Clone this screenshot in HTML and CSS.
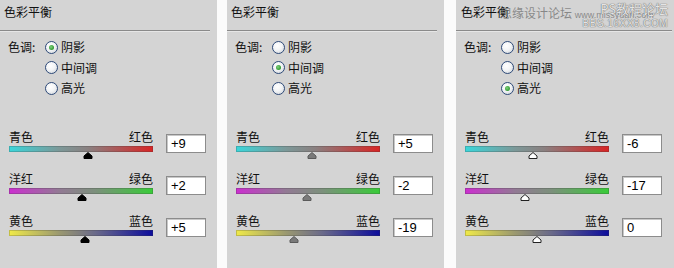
FILE: index.html
```html
<!DOCTYPE html>
<html lang="zh-CN">
<head>
<meta charset="utf-8">
<title>色彩平衡</title>
<link rel="stylesheet" href="styles.css">
</head>
<body>
<div class="wrap">

  <section class="panel p1 shadow">
    <div class="title">色彩平衡</div>
    <div class="rule"></div>
    <div class="tone">
      <span class="tone-label">色调:</span>
      <ul class="radios">
        <li><span class="radio on"></span>阴影</li>
        <li><span class="radio"></span>中间调</li>
        <li><span class="radio"></span>高光</li>
      </ul>
    </div>
    <div class="sliders">
      <div class="row">
        <div class="slider">
          <div class="ends"><span>青色</span><span>红色</span></div>
          <div class="track"><div class="bar cr"></div><svg class="thumb" style="left:78.5px" viewBox="0 0 9 7"><path d="M4.5 0.5 L8.5 4 L8.5 6.5 L0.5 6.5 L0.5 4 Z"/></svg></div>
        </div>
        <div class="val">+9</div>
      </div>
      <div class="row">
        <div class="slider">
          <div class="ends"><span>洋红</span><span>绿色</span></div>
          <div class="track"><div class="bar mg"></div><svg class="thumb" style="left:73.4px" viewBox="0 0 9 7"><path d="M4.5 0.5 L8.5 4 L8.5 6.5 L0.5 6.5 L0.5 4 Z"/></svg></div>
        </div>
        <div class="val">+2</div>
      </div>
      <div class="row">
        <div class="slider">
          <div class="ends"><span>黄色</span><span>蓝色</span></div>
          <div class="track"><div class="bar yb"></div><svg class="thumb" style="left:75.6px" viewBox="0 0 9 7"><path d="M4.5 0.5 L8.5 4 L8.5 6.5 L0.5 6.5 L0.5 4 Z"/></svg></div>
        </div>
        <div class="val">+5</div>
      </div>
    </div>
  </section>

  <section class="panel p2 mid">
    <div class="title">色彩平衡</div>
    <div class="rule"></div>
    <div class="tone">
      <span class="tone-label">色调:</span>
      <ul class="radios">
        <li><span class="radio"></span>阴影</li>
        <li><span class="radio on"></span>中间调</li>
        <li><span class="radio"></span>高光</li>
      </ul>
    </div>
    <div class="sliders">
      <div class="row">
        <div class="slider">
          <div class="ends"><span>青色</span><span>红色</span></div>
          <div class="track"><div class="bar cr"></div><svg class="thumb" style="left:75.6px" viewBox="0 0 9 7"><path d="M4.5 0.5 L8.5 4 L8.5 6.5 L0.5 6.5 L0.5 4 Z"/></svg></div>
        </div>
        <div class="val">+5</div>
      </div>
      <div class="row">
        <div class="slider">
          <div class="ends"><span>洋红</span><span>绿色</span></div>
          <div class="track"><div class="bar mg"></div><svg class="thumb" style="left:70.6px" viewBox="0 0 9 7"><path d="M4.5 0.5 L8.5 4 L8.5 6.5 L0.5 6.5 L0.5 4 Z"/></svg></div>
        </div>
        <div class="val">-2</div>
      </div>
      <div class="row">
        <div class="slider">
          <div class="ends"><span>黄色</span><span>蓝色</span></div>
          <div class="track"><div class="bar yb"></div><svg class="thumb" style="left:58.3px" viewBox="0 0 9 7"><path d="M4.5 0.5 L8.5 4 L8.5 6.5 L0.5 6.5 L0.5 4 Z"/></svg></div>
        </div>
        <div class="val">-19</div>
      </div>
    </div>
  </section>

  <section class="panel p3 high">
    <div class="title">色彩平衡</div>
    <div class="rule"></div>
    <div class="tone">
      <span class="tone-label">色调:</span>
      <ul class="radios">
        <li><span class="radio"></span>阴影</li>
        <li><span class="radio"></span>中间调</li>
        <li><span class="radio on"></span>高光</li>
      </ul>
    </div>
    <div class="sliders">
      <div class="row">
        <div class="slider">
          <div class="ends"><span>青色</span><span>红色</span></div>
          <div class="track"><div class="bar cr"></div><svg class="thumb" style="left:67.7px" viewBox="0 0 9 7"><path d="M4.5 0.5 L8.5 4 L8.5 6.5 L0.5 6.5 L0.5 4 Z"/></svg></div>
        </div>
        <div class="val">-6</div>
      </div>
      <div class="row">
        <div class="slider">
          <div class="ends"><span>洋红</span><span>绿色</span></div>
          <div class="track"><div class="bar mg"></div><svg class="thumb" style="left:59.8px" viewBox="0 0 9 7"><path d="M4.5 0.5 L8.5 4 L8.5 6.5 L0.5 6.5 L0.5 4 Z"/></svg></div>
        </div>
        <div class="val">-17</div>
      </div>
      <div class="row">
        <div class="slider">
          <div class="ends"><span>黄色</span><span>蓝色</span></div>
          <div class="track"><div class="bar yb"></div><svg class="thumb" style="left:72px" viewBox="0 0 9 7"><path d="M4.5 0.5 L8.5 4 L8.5 6.5 L0.5 6.5 L0.5 4 Z"/></svg></div>
        </div>
        <div class="val">0</div>
      </div>
    </div>
    <div class="wm wm-a">思缘设计论坛 <span class="wm-url">www.missyuan.com</span></div>
    <div class="wm wm-b">PS教程论坛</div>
    <div class="wm wm-c">BBS.16XX8.COM</div>
  </section>

</div>
</body>
</html>
```
FILE: styles.css
```css
html, body {
  margin: 0;
  padding: 0;
  background: #fbfbfb;
}

.wrap {
  display: flex;
  width: 674px;
  height: 268px;
  overflow: hidden;
  font-family: "Noto Sans CJK SC", "Liberation Sans", sans-serif;
  font-size: 12px;
  color: #111;
}

.panel {
  position: relative;
  background: #d4d4d4;
  height: 268px;
  box-sizing: border-box;
}

.p1 { width: 217px; }
.p2 { width: 217px; margin-left: 10px; }
.p3 { width: 218px; margin-left: 12px; }

.title {
  height: 14px;
  line-height: 14px;
  padding: 5px 0 0 4px;
}
.p3 .title { padding-left: 5px; }

.rule {
  margin-top: 11px;
  margin-right: 7px;
  border-top: 1px solid #8a8a8a;
  border-bottom: 1px solid #e6e6e6;
}
.p3 .rule { margin-right: 2px; }

.tone {
  display: flex;
  margin-top: 5px;
  padding-left: 8px;
}

.tone-label {
  width: 37px;
  height: 20px;
  line-height: 20px;
}

.radios {
  list-style: none;
  margin: 0;
  padding: 0;
}

.radios li {
  display: flex;
  align-items: center;
  height: 20.5px;
  line-height: 20px;
}

.radio {
  position: relative;
  width: 11px;
  height: 11px;
  border-radius: 50%;
  border: 1px solid #2e4a78;
  background: radial-gradient(circle at 40% 35%, #ffffff 0%, #f2f4f6 45%, #c9ced4 100%);
  margin-right: 3px;
  flex: none;
}

.radio.on::after {
  content: "";
  position: absolute;
  left: 3px;
  top: 3px;
  width: 5px;
  height: 5px;
  border-radius: 50%;
  background: radial-gradient(circle at 40% 40%, #7fd07f 0%, #2f9a2f 70%, #3a8a3a 100%);
}

.sliders {
  margin-top: 31px;
  padding-left: 9px;
  display: flex;
  flex-direction: column;
  gap: 13px;
}

.row {
  display: flex;
  align-items: flex-start;
  gap: 13px;
}

.slider {
  width: 144px;
}

.ends {
  display: flex;
  justify-content: space-between;
  height: 14px;
  line-height: 14px;
  margin-bottom: 2px;
}

.track {
  position: relative;
  height: 13px;
}

.bar {
  height: 6px;
  box-sizing: border-box;
  box-shadow: inset 0 0 0 1px rgba(60, 60, 60, 0.25);
}

.bar.cr { background: linear-gradient(to right, #3ad6da 0%, #7c9898 35%, #8a8080 55%, #d82424 100%); }
.bar.mg { background: linear-gradient(to right, #cc2ed0 0%, #927a94 35%, #7c907c 60%, #38cc38 100%); }
.bar.yb { background: linear-gradient(to right, #f0ea48 0%, #9a9870 35%, #6a6a8a 60%, #0c0c9c 100%); }

.thumb {
  position: absolute;
  top: 6px;
  width: 9px;
  height: 7px;
  transform: translateX(-50%);
  overflow: visible;
}

.shadow .thumb path { fill: #000; stroke: #000; stroke-width: 1; stroke-linejoin: round; }
.mid .thumb path { fill: #7a7a7a; stroke: #5a5a5a; stroke-width: 1; stroke-linejoin: round; }
.high .thumb path { fill: #fff; stroke: #222; stroke-width: 1; stroke-linejoin: round; }

.val {
  margin-top: 4px;
  width: 40px;
  height: 19px;
  box-sizing: border-box;
  background: #fff;
  border: 1px solid #8c8c8c;
  box-shadow: inset 1px 1px 0 #c8c8c8;
  padding-left: 4px;
  font-family: "Liberation Sans", Arial, sans-serif;
  font-size: 13px;
  line-height: 17px;
  color: #000;
}

.wm {
  position: absolute;
  white-space: nowrap;
  pointer-events: none;
}

.wm-a {
  left: 44px;
  top: 6px;
  font-size: 12px;
  line-height: 14px;
  color: rgba(110, 110, 110, 0.75);
}

.wm-url {
  font-family: "Liberation Sans", sans-serif;
  font-size: 9px;
}

.wm-b {
  right: 6px;
  top: 1px;
  font-size: 13px;
  line-height: 15px;
  color: #e4e4e4;
  text-shadow: 0 0 1px #6a6a6a, 0 0 1px #6a6a6a;
}

.wm-c {
  right: 6px;
  top: 18px;
  font-family: "Liberation Sans", sans-serif;
  font-size: 10px;
  line-height: 11px;
  letter-spacing: 0.5px;
  color: #e4e4e4;
  text-shadow: 0 0 1px #6a6a6a, 0 0 1px #6a6a6a;
}
```
